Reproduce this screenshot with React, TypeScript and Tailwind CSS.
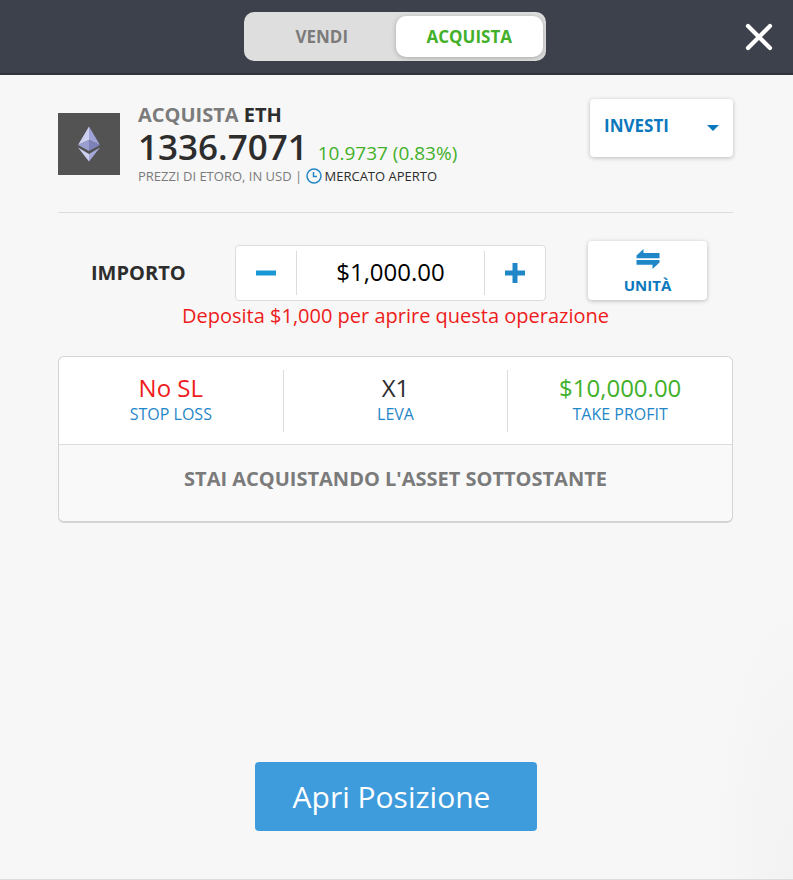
import { useState } from "react";

type Side = "VENDI" | "ACQUISTA";

const SIDES: Side[] = ["VENDI", "ACQUISTA"];

const SETTINGS = [
  { label: "STOP LOSS", value: "No SL", tone: "text-[#ee1c1c]" },
  { label: "LEVA", value: "X1", tone: "text-[#2d2d2d]" },
  { label: "TAKE PROFIT", value: "$10,000.00", tone: "text-[#43b02a]" },
];

function EthLogo() {
  return (
    <svg viewBox="0 0 62 62" className="size-[62px] shrink-0" role="img" aria-label="Ethereum">
      <rect width="62" height="62" fill="#535353" />
      <path d="M31 13.5 20 32l11-5z" fill="#cdd1f1" />
      <path d="M31 13.5 42 32l-11-5z" fill="#9fa2d6" />
      <path d="M20 32l11-5v11z" fill="#9a9fd0" />
      <path d="M42 32l-11-5v11z" fill="#7d82b8" />
      <path d="M20 34.5l11 6.5v7.5z" fill="#cdd1f1" />
      <path d="M42 34.5l-11 6.5v7.5z" fill="#a5a9da" />
    </svg>
  );
}

function ClockIcon() {
  return (
    <svg viewBox="0 0 16 16" className="size-4 shrink-0" fill="none" stroke="#2388c8" strokeWidth="1.5" aria-hidden>
      <circle cx="8" cy="8" r="7" />
      <path d="M7.5 4v4.5H11" />
    </svg>
  );
}

function SwapIcon() {
  return (
    <svg viewBox="0 0 24 20" className="h-5 w-6 shrink-0" fill="#1f87c8" aria-hidden>
      <path d="M0.5 6.5 7.5 0v4h16v5.3H0.5z" />
      <path d="M23.5 13.5 16.5 20v-4.3h-16V11h23z" />
    </svg>
  );
}

function Header({ side, onChange }: { side: Side; onChange: (side: Side) => void }) {
  return (
    <header className="grid h-[75px] shrink-0 grid-cols-[1fr_302px_1fr] items-center border-b-2 border-[#30343c] bg-[#3d414c] pr-[3px]">
      <div className="col-start-2 grid h-[49px] grid-cols-2 rounded-[10px] bg-[#dedede] p-1 pr-[3px]">
        {SIDES.map((s) => (
          <button
            key={s}
            type="button"
            aria-pressed={s === side}
            onClick={() => onChange(s)}
            className={
              s === side
                ? "cursor-pointer rounded-[10px] bg-white text-[17px] font-bold text-[#43b02a] shadow-[0_1px_5px_rgba(0,0,0,0.25)]"
                : "cursor-pointer rounded-[10px] text-[17px] font-bold text-[#7b7b7b]"
            }
          >
            {s}
          </button>
        ))}
      </div>
      <button type="button" aria-label="Chiudi" className="mr-4 cursor-pointer justify-self-end">
        <svg viewBox="0 0 30 30" className="size-[30px]" stroke="#fff" strokeWidth="4.2" strokeLinecap="round" aria-hidden>
          <path d="M4 4l22 22M26 4L4 26" />
        </svg>
      </button>
    </header>
  );
}

export default function App() {
  const [side, setSide] = useState<Side>("ACQUISTA");
  const [amount, setAmount] = useState(1000);

  const formatted = "$" + amount.toLocaleString("en-US", { minimumFractionDigits: 2 });
  const step = (delta: number) => setAmount((a) => Math.max(0, a + delta));

  return (
    <div className="flex min-h-screen flex-col border-b border-[#dcdcdc] bg-[#f7f7f7] bg-[radial-gradient(ellipse_80px_280px_at_100%_100%,#f2f2f2,#f7f7f7)] font-['Open_Sans','Noto_Sans',sans-serif]">
      <Header side={side} onChange={setSide} />

      <main className="flex flex-1 flex-col pt-6 pr-[60px] pb-12 pl-[58px]">
        {/* Asset */}
        <section className="flex items-start border-b border-[#dcdcdc] pb-[27px]">
          <div className="pt-[14px]">
            <EthLogo />
          </div>
          <div className="ml-[18px] flex-1 pt-1">
            <h1 className="text-xl leading-6 font-bold text-[#7b7b7b]">
              {side} <span className="text-[#2d2d2d]">ETH</span>
            </h1>
            <p className="flex h-10 items-baseline gap-[10px]">
              <span className="text-[35px] leading-10 font-semibold text-[#2d2d2d]">1336.7071</span>
              <span className="text-[19px] leading-5 text-[#43b02a]">10.9737 (0.83%)</span>
            </p>
            <p className="flex items-center text-[13px] leading-[18px] text-[#7b7b7b]">
              PREZZI DI ETORO, IN USD&nbsp;|&nbsp;
              <ClockIcon />
              <span className="ml-[3px] text-[#2d2d2d]">MERCATO APERTO</span>
            </p>
          </div>
          <div className="relative">
            <select
              aria-label="Tipo di ordine"
              className="h-[58px] w-[143px] cursor-pointer appearance-none rounded bg-white pb-1 pl-[14px] text-[17px] font-bold text-[#0b78be] shadow-[0_1px_4px_rgba(0,0,0,0.25)]"
            >
              <option>INVESTI</option>
            </select>
            <svg viewBox="0 0 12 6" className="pointer-events-none absolute top-[26px] right-[14px] h-[6px] w-3" fill="#0b78be" aria-hidden>
              <path d="M0 0h12L6 6z" />
            </svg>
          </div>
        </section>

        {/* Amount */}
        <section className="mt-7 flex items-start">
          <label htmlFor="amount" className="w-[177px] pt-[18px] pl-[33px] text-xl font-bold text-[#2d2d2d]">
            IMPORTO
          </label>
          <div className="mt-1 flex h-14 w-[311px] items-center rounded border border-[#dcdcdc] bg-white">
            <button type="button" aria-label="Diminuisci" onClick={() => step(-50)} className="flex h-11 w-[61px] cursor-pointer items-center justify-center border-r border-[#dcdcdc]">
              <svg viewBox="0 0 22 22" className="size-[22px]" stroke="#1a98d5" strokeWidth="5" aria-hidden>
                <path d="M1 11h20" />
              </svg>
            </button>
            <input
              id="amount"
              type="text"
              value={formatted}
              onChange={(e) => setAmount(Number(e.target.value.replace(/[^\d.]/g, "")) || 0)}
              className="h-11 w-full min-w-0 flex-1 pb-1 text-center text-2xl font-medium text-black outline-none"
            />
            <button type="button" aria-label="Aumenta" onClick={() => step(50)} className="flex h-11 w-[61px] cursor-pointer items-center justify-center border-l border-[#dcdcdc]">
              <svg viewBox="0 0 22 22" className="size-[22px]" stroke="#1f87c8" strokeWidth="5" aria-hidden>
                <path d="M1 11h20M11 1v20" />
              </svg>
            </button>
          </div>
          <button type="button" className="ml-[42px] flex h-[59px] w-[119px] cursor-pointer flex-col items-center rounded bg-white pt-2 text-[15px] leading-8 font-bold text-[#0b78be] shadow-[0_1px_4px_rgba(0,0,0,0.25)]">
            <SwapIcon />
            UNITÀ
          </button>
        </section>
        <p className="text-center text-xl leading-[30px] text-[#ee1c1c]">Deposita $1,000 per aprire questa operazione</p>

        {/* Trade settings */}
        <section className="mt-[25px] rounded-md border border-b-2 border-[#d4d4d4] bg-[#f9f9f9]">
          <div className="flex rounded-t-md border-b border-[#dcdcdc] bg-white pt-[13px] pb-3 *:not-last:border-r">
            {SETTINGS.map((item) => (
              <button key={item.label} type="button" className="flex-1 cursor-pointer border-[#dcdcdc] pt-[2px] pb-2">
                <span className={`block text-2xl leading-8 ${item.tone}`}>{item.value}</span>
                <span className="block text-base leading-5 text-[#1f87c8]">{item.label}</span>
              </button>
            ))}
          </div>
          <p className="pt-4 pb-6 text-center text-xl leading-9 font-bold text-[#7b7b7b]">STAI ACQUISTANDO L'ASSET SOTTOSTANTE</p>
        </section>

        <button type="button" className="mx-auto mt-auto h-[69px] w-[282px] cursor-pointer rounded-sm bg-[#3e9bdc] pr-2 text-3xl text-white">
          Apri Posizione
        </button>
      </main>
    </div>
  );
}
